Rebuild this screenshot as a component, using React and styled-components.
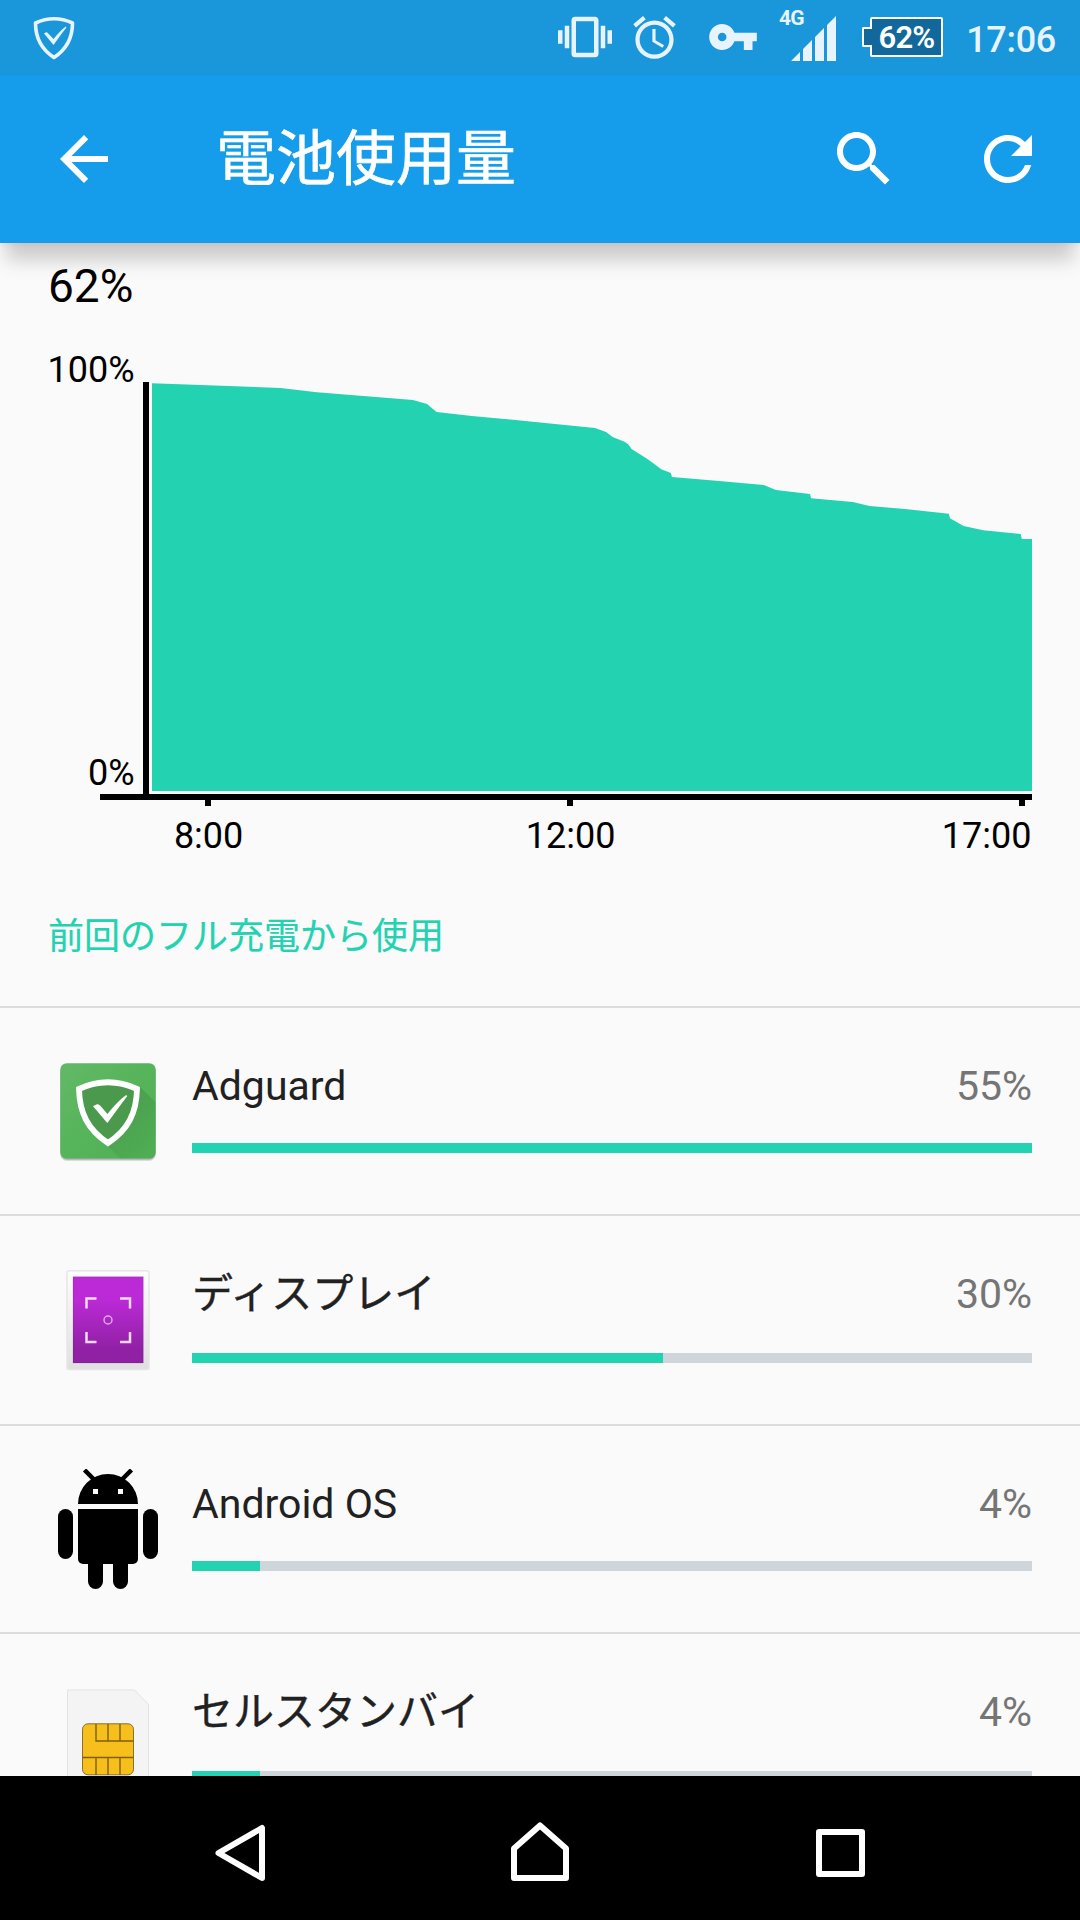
import React from 'react';
import styled, { createGlobalStyle } from 'styled-components';

const TEAL = '#22d2b0';

const GlobalStyle = createGlobalStyle`
  body {
    margin: 0;
    background: #fafafa;
    font-family: Roboto, 'Noto Sans CJK JP', sans-serif;
  }

  svg {
    display: block;
    flex-shrink: 0;
  }
`;

const Screen = styled.div`
  display: flex;
  flex-direction: column;
  width: 1080px;
  height: 1920px;
  overflow: hidden;
`;

const StatusBar = styled.div`
  display: flex;
  justify-content: space-between;
  height: 75px;
  flex-shrink: 0;
  background: #1a96db;
  color: #e8f4fd;
  fill: #e8f4fd;
`;

const StatusIcons = styled.div`
  display: flex;
`;

const StatusIcon = styled.svg`
  width: ${props => props.$size}px;
  height: ${props => props.$size}px;
  margin-top: ${props => props.$top}px;
  margin-left: ${props => props.$left || 0}px;
`;

const Network = styled.div`
  display: flex;
  margin-left: 20px;
  width: 58px;
`;

const NetworkType = styled.div`
  width: 12px;
  margin-top: 6px;
  font-size: 21px;
  line-height: 24px;
  font-weight: 700;
  letter-spacing: -0.8px;
  white-space: nowrap;
`;

const Signal = styled.svg`
  width: 46px;
  height: 46px;
  margin-top: 15px;
`;

const Battery = styled.div`
  display: flex;
  align-items: center;
  margin: 17px 0 0 25px;
  height: 40px;
`;

// overlaps the body's border so the outline stays open between the two
const BatteryTip = styled.div`
  box-sizing: border-box;
  z-index: 1;
  width: 10px;
  height: 20px;
  margin-right: -2px;
  border: 2px solid #fff;
  border-right: 0;
  border-radius: 2px 0 0 2px;
  background: #12689a;
`;

const BatteryBody = styled.div`
  box-sizing: border-box;
  width: 73px;
  height: 40px;
  border: 2px solid #fff;
  border-radius: 2px;
  background: #12689a;
  color: #fff;
  font-size: 31px;
  font-weight: 600;
  letter-spacing: -0.8px;
  line-height: 37px;
  text-align: center;
`;

const Clock = styled.div`
  width: 137px;
  box-sizing: border-box;
  padding: 18px 24px 0 0;
  font-size: 36px;
  font-weight: 500;
  letter-spacing: -0.3px;
  line-height: 44px;
  text-align: right;
`;

const AppBar = styled.div`
  position: relative;
  z-index: 1;
  display: flex;
  align-items: center;
  height: 168px;
  flex-shrink: 0;
  padding: 0 36px 0 48px;
  background: #159ceb;
  color: #fff;
  box-shadow: 0 23px 18px -6px rgba(0, 0, 0, 0.19), 0 2px 5px rgba(0, 0, 0, 0.05);
`;

const ActionIcon = styled.svg`
  width: 72px;
  height: 72px;
  margin-left: ${props => props.$gap || 0}px;
  fill: #fff;
`;

const Title = styled.div`
  flex: 1;
  margin-left: 96px;
  padding-top: 1px;
  font-size: 60px;
  line-height: 72px;
  -webkit-text-stroke: 0.6px #fff;
`;

const Content = styled.div`
  flex: 1;
  min-height: 0;
  overflow: hidden;
`;

const Level = styled.div`
  box-sizing: border-box;
  height: 107px;
  padding: 16px 48px 0;
  color: #000;
  font-size: 46px;
  line-height: 54px;
`;

const Chart = styled.svg`
  width: 1080px;
  height: 520px;

  text {
    font-size: 36px;
    fill: #000;
  }
`;

const SectionTitle = styled.div`
  box-sizing: border-box;
  height: 136px;
  padding: 45px 48px 0;
  color: ${TEAL};
  font-size: 36px;
  line-height: 44px;
  -webkit-text-stroke: 0.2px ${TEAL};
`;

const Row = styled.div`
  box-sizing: border-box;
  display: flex;
  height: ${props => (props.$tall ? 210 : 208)}px;
  border-top: 2px solid #dcdcdc;
  padding: 0 48px;
`;

const AppIcon = styled.svg`
  width: 120px;
  height: 120px;
  align-self: center;
`;

const Info = styled.div`
  flex: 1;
  display: flex;
  flex-direction: column;
  justify-content: space-between;
  margin-left: 24px;
  padding: 53px 0 61px;
`;

const Labels = styled.div`
  display: flex;
  justify-content: space-between;
  font-size: 41px;
  line-height: 50px;
`;

const Name = styled.span`
  color: #212121;
  -webkit-text-stroke: ${props => (props.$tall ? '0.4px' : 0)} #212121;
`;

const Percent = styled.span`
  color: #757575;
`;

const Track = styled.div`
  height: 10px;
  background: #ced6dc;
`;

const Fill = styled.div`
  height: 100%;
  background: ${TEAL};
`;

const NavBar = styled.div`
  height: 144px;
  flex-shrink: 0;
  display: flex;
  align-items: center;
  justify-content: center;
  gap: 204px;
  padding-top: 10px;
  box-sizing: border-box;
  background: #000;
`;

const NavIcon = styled.svg`
  width: 96px;
  height: 96px;
  fill: none;
  stroke: #fff;
  stroke-width: 6;
  stroke-linejoin: round;
`;

// battery level over time, in screen units
const LEVELS = [
  [152, 383.3], [280.6, 388], [316.8, 392.3], [413, 400], [427, 404], [436.6, 412],
  [471.8, 416], [513, 419.7], [540, 422.5], [595, 428], [606, 432], [612.7, 437],
  [624.4, 441.7], [628.2, 444.3], [631.6, 449], [647.4, 459], [655.7, 465], [661.2, 469.3],
  [670.9, 473], [671.9, 477], [719, 481], [763.8, 485], [775.9, 490], [810, 494],
  [811, 498.3], [852.7, 502], [869.5, 506], [905, 509], [948.8, 513.7], [950, 518.3],
  [963.6, 526], [983.2, 530.3], [1020.7, 534], [1021.8, 539], [1032, 539],
];

const TICKS = [205, 567, 1019];

const BatteryChart = () => (
  <Chart viewBox="0 350 1080 520">
    <polygon
      fill={TEAL}
      points={[...LEVELS, [1032, 791], [152, 791]].map(p => p.join(',')).join(' ')}
    />
    <rect x="143" y="382" width="6" height="418" />
    <rect x="100" y="794" width="932" height="6" />
    {TICKS.map(x => <rect key={x} x={x} y="800" width="6" height="6" />)}
    <text x="134.6" y="382" textAnchor="end">100%</text>
    <text x="134.6" y="785" textAnchor="end">0%</text>
    <text x="208.6" y="848" textAnchor="middle">8:00</text>
    <text x="570.6" y="848" textAnchor="middle">12:00</text>
    <text x="1031.4" y="848" textAnchor="end">17:00</text>
  </Chart>
);

const AdguardIcon = () => (
  <AppIcon viewBox="0 0 120 120">
    <defs>
      <linearGradient id="green" x1="0" y1="0" x2="1" y2="1">
        <stop offset="0" stopColor="#62b966" />
        <stop offset="0.5" stopColor="#56b45a" />
        <stop offset="1" stopColor="#4fb053" />
      </linearGradient>
      <linearGradient id="longShadow" gradientUnits="userSpaceOnUse" x1="70" y1="70" x2="104" y2="104">
        <stop offset="0" stopOpacity="0.1" />
        <stop offset="1" stopOpacity="0.01" />
      </linearGradient>
    </defs>
    <rect x="12.3" y="14.5" width="95.4" height="95.4" rx="6.5" fill="#000" opacity="0.12" />
    <rect x="12.3" y="13.3" width="95.4" height="95.4" rx="6.5" fill="#000" opacity="0.2" />
    <rect x="12.3" y="12.2" width="95.4" height="95.4" rx="6.5" fill="url(#green)" />
    <path d="M92 36L107.7 51.5V101q0 6.6-6.5 6.6H72.5L60 95.5z" fill="url(#longShadow)" />
    <path
      d="M31 38Q60 24.5 89 38C88.500 62 80 79 60 92C40 79 31.500 62 31 38z"
      fill="#4b994d"
      stroke="#fff"
      strokeWidth="5.8"
    />
    <path
      d="M45 55.300L49 53.300Q51 53 52.300 54.800L59.500 63C65 56 72 48 78.300 44L79.200 45.200C73 53 66 63 59.300 72z"
      fill="#fff"
    />
  </AppIcon>
);

const DisplayIcon = () => (
  <AppIcon viewBox="0 0 120 120">
    <defs>
      <linearGradient id="frame" x1="0" y1="0" x2="0" y2="1">
        <stop offset="0" stopColor="#fdfdfd" />
        <stop offset="1" stopColor="#e0e0e0" />
      </linearGradient>
      <linearGradient id="purple" x1="0" y1="0" x2="0" y2="1">
        <stop offset="0.25" stopColor="#bc2ad8" />
        <stop offset="0.85" stopColor="#9020a4" />
      </linearGradient>
    </defs>
    <rect x="19" y="10.8" width="82" height="98.600" rx="2" fill="url(#frame)" stroke="#e6e6e6" strokeWidth="1.500" />
    <rect x="25" y="16.700" width="70.300" height="86.300" fill="url(#purple)" stroke="#000" strokeOpacity="0.12" />
    <path
      d="M38.500 48.500V38.500H48.500M72 38.500H82V48.500M38.500 72V82H48.500M72 82H82V72"
      fill="none"
      stroke="#f3dcf7"
      strokeWidth="2.500"
    />
    <circle cx="60" cy="60" r="4" fill="none" stroke="#fff" strokeOpacity="0.6" strokeWidth="1.500" />
  </AppIcon>
);

const AndroidIcon = () => (
  <AppIcon viewBox="0 0 120 120">
    <path d="M30 35a30 30 0 0 1 60 0zM45 20v5h5v-5zM70 20v5h5v-5z" fillRule="evenodd" />
    <path d="M36.500 1L46 10.500M83.500 1L74 10.500" stroke="#000" strokeWidth="4.500" />
    <path d="M30 40H90V90a5 5 0 0 1-5 5H35a5 5 0 0 1-5-5z" />
    <rect x="10" y="40" width="15" height="50" rx="7.500" />
    <rect x="95" y="40" width="15" height="50" rx="7.500" />
    <rect x="40" y="85" width="15" height="35" rx="7.500" />
    <rect x="65" y="85" width="15" height="35" rx="7.500" />
  </AppIcon>
);

const SimIcon = () => (
  <AppIcon viewBox="0 0 120 120">
    <path d="M19.500 12H86.500L100.500 26.500V110H19.500z" fill="#f4f4f4" stroke="#e2e2e2" />
    <rect x="34.500" y="45.800" width="51" height="51" rx="5.500" fill="#f6bf1b" stroke="#86712f" />
    <path
      d="M48 46V63H85.500M60 46V63M72 46V63M34.500 79.500H85.500M48 79.500V97M60 79.500V97M72 79.500V97"
      fill="none"
      stroke="#805f0c"
      strokeWidth="1.400"
    />
  </AppIcon>
);

const APPS = [
  { name: 'Adguard', percent: 55, bar: 100, Icon: AdguardIcon },
  { name: 'ディスプレイ', percent: 30, bar: 56.1, Icon: DisplayIcon, tall: true },
  { name: 'Android OS', percent: 4, bar: 8.1, Icon: AndroidIcon },
  { name: 'セルスタンバイ', percent: 4, bar: 8.1, Icon: SimIcon, tall: true },
];

const App = () => (
  <Screen>
    <GlobalStyle />
    <StatusBar>
      <StatusIcon $size={44} $top={16} $left={32} viewBox="0 0 44 44">
        <path
          d="M3.500 7Q22 -1.500 40.500 7C40.500 22 35 33 22 41.500C9 33 3.500 22 3.500 7z"
          fill="none"
          stroke="#e8f4fd"
          strokeWidth="3.600"
          strokeLinejoin="round"
        />
        <path d="M12 17.500L14 16.300Q15.300 16.200 16 17.200L21.500 23C25 18.500 29 14 33.800 10.500L34.400 11.500C30 17 26 23 21.500 29z" />
      </StatusIcon>
      <StatusIcons>
        <StatusIcon $size={54} $top={10} viewBox="0 0 24 24">
          <path d="M0 15h2V9H0v6zm3 2h2V7H3v10zm19-8v6h2V9h-2zm-3 8h2V7h-2v10zM16.5 3h-9C6.670 3 6 3.670 6 4.500v15c0 .83.67 1.500 1.500 1.500h9c.83 0 1.500-.67 1.500-1.500v-15c0-.83-.67-1.500-1.500-1.500zM16 19H8V5h8v14z" />
        </StatusIcon>
        <StatusIcon $size={51} $top={12} $left={17} viewBox="0 0 24 24">
          <path d="M22 5.720l-4.600-3.860-1.290 1.530 4.600 3.860L22 5.720zM7.880 3.390L6.600 1.860 2 5.710l1.290 1.530 4.590-3.850zM12.500 8H11v6l4.750 2.850.75-1.230-4-2.370V8zM12 4c-4.970 0-9 4.030-9 9s4.020 9 9 9c4.970 0 9-4.030 9-9s-4.030-9-9-9zm0 16c-3.870 0-7-3.130-7-7s3.130-7 7-7 7 3.130 7 7-3.130 7-7 7z" />
        </StatusIcon>
        <StatusIcon $size={52} $top={11} $left={27} viewBox="0 0 24 24">
          <path d="M12.650 10C11.830 7.670 9.610 6 7 6c-3.310 0-6 2.690-6 6s2.690 6 6 6c2.610 0 4.830-1.670 5.650-4H17v4h4v-4h2v-4H12.650zM7 14c-1.100 0-2-.9-2-2s.9-2 2-2 2 .9 2 2-.9 2-2 2z" />
        </StatusIcon>
        <Network>
          <NetworkType>4G</NetworkType>
          <Signal viewBox="0 0 46 46">
            <path d="M0 46L9 37V46zM12 34L21 25V46H12zM24 22L33 13V46H24zM36 10L45 1V46H36z" />
          </Signal>
        </Network>
        <Battery>
          <BatteryTip />
          <BatteryBody>62%</BatteryBody>
        </Battery>
        <Clock>17:06</Clock>
      </StatusIcons>
    </StatusBar>

    <AppBar>
      <ActionIcon viewBox="0 0 24 24">
        <path d="M20 11H7.830l5.590-5.590L12 4l-8 8 8 8 1.410-1.410L7.830 13H20v-2z" />
      </ActionIcon>
      <Title>電池使用量</Title>
      <ActionIcon viewBox="0 0 24 24">
        <path d="M15.500 14h-.79l-.28-.27C15.410 12.590 16 11.110 16 9.500 16 5.910 13.090 3 9.500 3S3 5.910 3 9.500 5.910 16 9.500 16c1.610 0 3.090-.59 4.230-1.570l.27.28v.79l5 4.990L20.490 19l-4.990-5zm-6 0C7.010 14 5 11.990 5 9.500S7.010 5 9.500 5 14 7.010 14 9.500 11.990 14 9.500 14z" />
      </ActionIcon>
      <ActionIcon $gap={72} viewBox="0 0 24 24">
        <path d="M17.650 6.350C16.200 4.900 14.210 4 12 4c-4.420 0-7.990 3.580-7.990 8s3.570 8 7.990 8c3.730 0 6.840-2.550 7.730-6h-2.080c-.82 2.330-3.040 4-5.650 4-3.310 0-6-2.690-6-6s2.690-6 6-6c1.660 0 3.140.69 4.220 1.780L13 11h7V4l-2.350 2.350z" />
      </ActionIcon>
    </AppBar>

    <Content>
      <Level>62%</Level>
      <BatteryChart />
      <SectionTitle>前回のフル充電から使用</SectionTitle>
      {APPS.map(({ name, percent, bar, Icon, tall }) => (
        <Row key={name} $tall={tall}>
          <Icon />
          <Info>
            <Labels>
              <Name $tall={tall}>{name}</Name>
              <Percent>{percent}%</Percent>
            </Labels>
            <Track>
              <Fill style={{ width: `${bar}%` }} />
            </Track>
          </Info>
        </Row>
      ))}
    </Content>

    <NavBar>
      <NavIcon viewBox="0 0 96 96">
        <path d="M70 23V73L26.500 48z" />
      </NavIcon>
      <NavIcon viewBox="0 0 96 96">
        <path d="M22 43.500L48 20.500L74 43.500V73H22z" />
      </NavIcon>
      <NavIcon viewBox="0 0 96 96">
        <rect x="27" y="27" width="43" height="42" />
      </NavIcon>
    </NavBar>
  </Screen>
);

export default App;
